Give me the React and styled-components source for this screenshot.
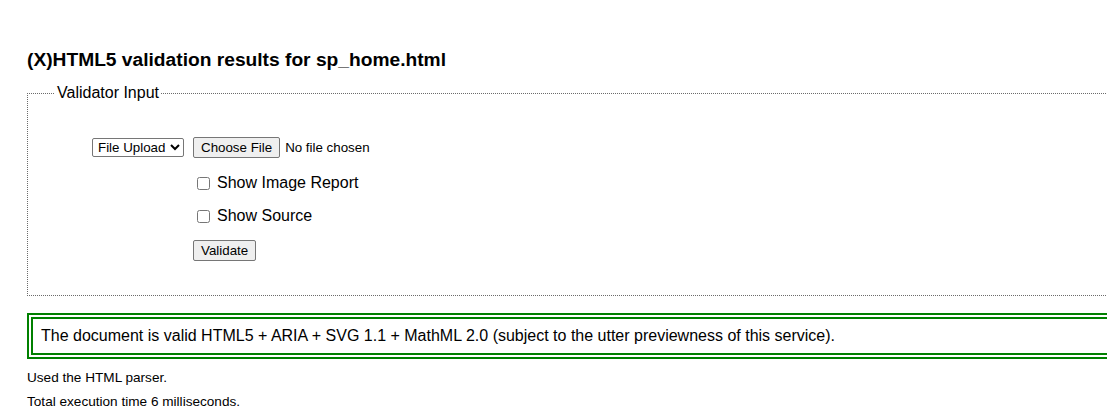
import React from "react";
import styled, { createGlobalStyle } from "styled-components";

const Global = createGlobalStyle`
  html, body { margin: 0; padding: 0; background: #fff; overflow: hidden; }
  body { font-family: "Liberation Sans", Arial, sans-serif; color: #000; }
`;

const Page = styled.div`
  width: 1180px;
  padding: 49px 0 0 27px;
  box-sizing: border-box;
`;

const Title = styled.h2`
  margin: 0 0 13px;
  font-size: 19.2px;
  line-height: 22px;
  font-weight: bold;
`;

const Fieldset = styled.fieldset`
  margin: 0;
  border: 1px dotted #6b6b6b;
  padding: 0 0 25px 27px;
`;

const Legend = styled.legend`
  padding: 0 2px;
  font-size: 16px;
  line-height: 18px;
`;

const FormGrid = styled.div`
  display: grid;
  grid-template-columns: 101px auto;
  grid-template-rows: 34px 38px 28px 40px;
  align-items: center;
  margin: 28px 0 0 37px;
`;

const Cell = styled.div`
  grid-column: ${(p) => p.$col};
  display: flex;
  align-items: center;
`;

const Select = styled.select`
  width: 92px;
  height: 19px;
  margin: 0;
  font-family: "Liberation Sans", Arial, sans-serif;
  font-size: 13.33px;
  color: #000;
  background: #fff;
  border: 1px solid #767676;
  border-radius: 2px;
  padding: 0 0 0 1px;
`;

const Button = styled.button`
  height: 21px;
  margin: 0;
  padding: 1px 7px;
  font-family: "Liberation Sans", Arial, sans-serif;
  font-size: 13.33px;
  color: #000;
  background: #efefef;
  border: 1px solid #767676;
  border-radius: 2px;
`;

const FileStatus = styled.span`
  margin-left: 5px;
  font-size: 13.33px;
`;

const CheckLabel = styled.label`
  display: flex;
  align-items: center;
  font-size: 16px;
`;

const Check = styled.input`
  width: 13px;
  height: 13px;
  margin: 0 7px 0 4px;
`;

const ValidBox = styled.div`
  margin-top: 17px;
  border: 6px double #008000;
  padding: 8px;
  font-size: 16px;
  line-height: 18px;
`;

const Note = styled.p`
  margin: ${(p) => p.$mt}px 0 0;
  font-size: 13.6px;
  line-height: 16px;
`;

export default function App() {
  return (
    <>
      <Global />
      <Page>
        <Title>(X)HTML5 validation results for sp_home.html</Title>
        <Fieldset>
          <Legend>Validator Input</Legend>
          <FormGrid>
            <Cell $col={1}>
              <Select defaultValue="file">
                <option value="file">File Upload</option>
                <option value="uri">Address</option>
                <option value="text">Text Field</option>
              </Select>
            </Cell>
            <Cell $col={2}>
              <Button type="button">Choose File</Button>
              <FileStatus>No file chosen</FileStatus>
            </Cell>
            <Cell $col={2}>
              <CheckLabel>
                <Check type="checkbox" />
                Show Image Report
              </CheckLabel>
            </Cell>
            <Cell $col={2}>
              <CheckLabel>
                <Check type="checkbox" />
                Show Source
              </CheckLabel>
            </Cell>
            <Cell $col={2}>
              <Button type="button">Validate</Button>
            </Cell>
          </FormGrid>
        </Fieldset>
        <ValidBox>
          The document is valid HTML5 + ARIA + SVG 1.1 + MathML 2.0 (subject to the utter previewness of this service).
        </ValidBox>
        <Note $mt={11}>Used the HTML parser.</Note>
        <Note $mt={8}>Total execution time 6 milliseconds.</Note>
      </Page>
    </>
  );
}
